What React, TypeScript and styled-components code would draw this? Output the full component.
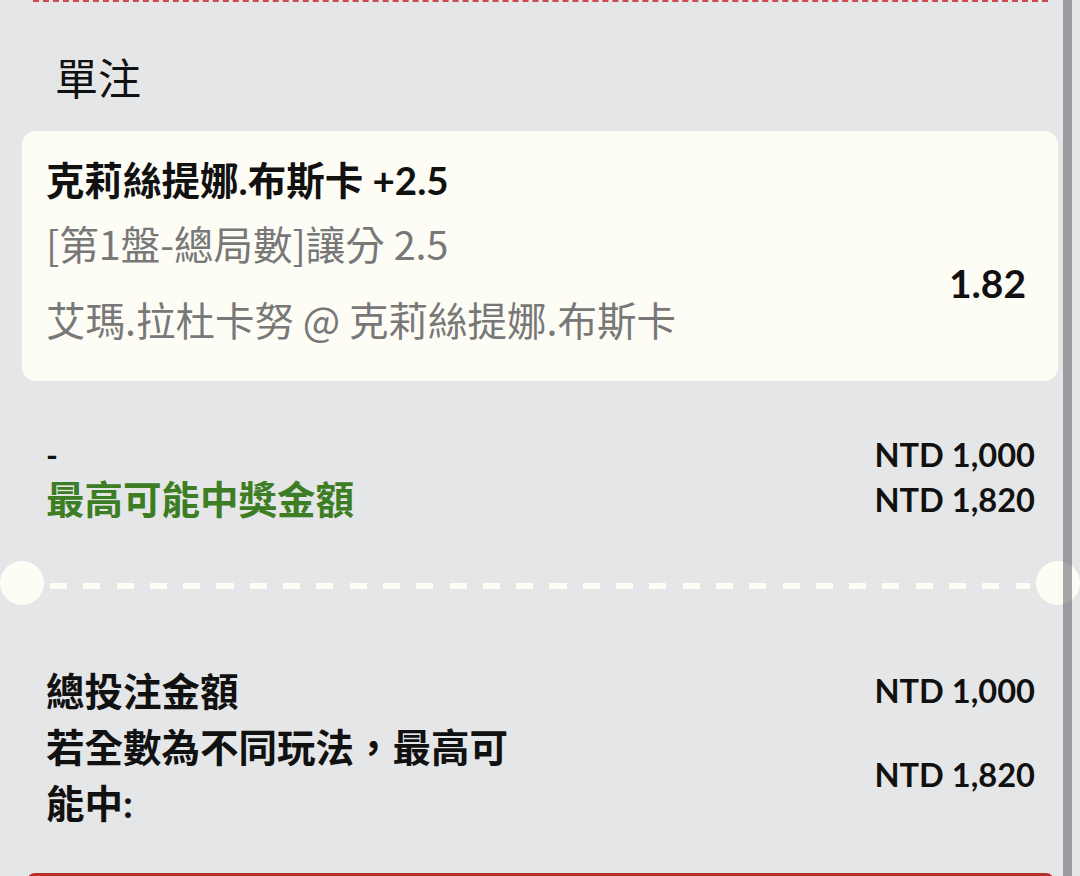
import styled, {createGlobalStyle} from "styled-components";

const GlobalStyle = createGlobalStyle`
  html, body {
    margin: 0;
    padding: 0;
    height: 876px;
    overflow: hidden;
    background-color: #e5e6e8;
  }
  body {
    font-family: Lato, "Noto Sans CJK TC", sans-serif;
    color: #111;
  }
`;

const Page = styled.div`
  position: relative;
  height: 876px;
  padding: 0 22px;
  box-sizing: border-box;
`;

const TopEdge = styled.div`
  margin: 0 10px 0 11px;
  border-top: 2px dashed #cf4a4f;
`;

const Heading = styled.h2`
  margin: 49px 0 24px 33px;
  font-size: 43px;
  line-height: 56px;
  font-weight: 400;
`;

const BetCard = styled.div`
  display: flex;
  align-items: flex-start;
  justify-content: space-between;
  height: 250px;
  box-sizing: border-box;
  padding: 25px 32px 0 24px;
  background-color: #fdfdf6;
  border-radius: 14px;
`;

const BetInfo = styled.div`
  display: flex;
  flex-direction: column;
`;

const BetTitle = styled.div`
  font-size: 38.5px;
  line-height: 48px;
  font-weight: 700;
  white-space: nowrap;
`;

const BetDetail = styled.div<{$gap: number}>`
  font-family: "Noto Sans CJK TC", "Noto Sans", sans-serif;
  font-size: 39.5px;
  line-height: 48px;
  font-weight: 400;
  color: #787878;
  margin-top: ${(p) => p.$gap}px;
  white-space: nowrap;
`;

const Odds = styled.div`
  font-size: 39px;
  line-height: 48px;
  font-weight: 700;
  margin-top: 103px;
`;

const Summary = styled.div<{$top: number}>`
  display: flex;
  flex-direction: column;
  padding: 0 23px 0 24px;
  margin-top: ${(p) => p.$top}px;
`;

const Row = styled.div<{$line: number}>`
  display: flex;
  align-items: center;
  justify-content: space-between;
  line-height: ${(p) => p.$line}px;
`;

const Label = styled.div<{$green?: boolean; $size?: number}>`
  width: 480px;
  font-size: ${(p) => p.$size ?? 38.5}px;
  font-weight: 700;
  color: ${(p) => (p.$green ? "#3d7d24" : "#111")};
`;

const Amount = styled.div`
  font-size: 32.6px;
  font-weight: 700;
  white-space: nowrap;
`;

const Divider = styled.div`
  position: relative;
  height: 44px;
  margin-top: 39px;
  display: flex;
  align-items: center;
`;

const Dashes = styled.div`
  flex: 1;
  height: 6px;
  margin: 6px 28px 0;
  background: repeating-linear-gradient(
    to right,
    #fdfdf6 0 17px,
    transparent 17px 33.3px
  );
`;

const Notch = styled.div<{$side: "left" | "right"}>`
  position: absolute;
  top: 0;
  ${(p) => p.$side}: -22px;
  width: 44px;
  height: 44px;
  border-radius: 50%;
  background-color: #fdfdf6;
`;

const SubmitBar = styled.div`
  position: absolute;
  left: 27px;
  right: 26px;
  top: 873px;
  height: 60px;
  border-radius: 8px;
  background-color: #b5302b;
`;

const Scrollbar = styled.div`
  position: absolute;
  top: 0;
  right: 8px;
  width: 9px;
  height: 876px;
  background-color: rgba(80, 80, 86, 0.5);
`;

function App() {
  return (
    <>
      <GlobalStyle />
      <Page>
        <TopEdge />
        <Heading>單注</Heading>
        <BetCard>
          <BetInfo>
            <BetTitle>克莉絲提娜.布斯卡 +2.5</BetTitle>
            <BetDetail $gap={15}>[第1盤-總局數]讓分 2.5</BetDetail>
            <BetDetail $gap={28}>艾瑪.拉杜卡努 @ 克莉絲提娜.布斯卡</BetDetail>
          </BetInfo>
          <Odds>1.82</Odds>
        </BetCard>

        <Summary $top={51}>
          <Row $line={45}>
            <Label $size={32}>-</Label>
            <Amount>NTD 1,000</Amount>
          </Row>
          <Row $line={45}>
            <Label $green>最高可能中獎金額</Label>
            <Amount>NTD 1,820</Amount>
          </Row>
        </Summary>

        <Divider>
          <Notch $side="left" />
          <Dashes />
          <Notch $side="right" />
        </Divider>

        <Summary $top={58}>
          <Row $line={56}>
            <Label>總投注金額</Label>
            <Amount>NTD 1,000</Amount>
          </Row>
          <Row $line={56}>
            <Label>若全數為不同玩法，最高可能中:</Label>
            <Amount>NTD 1,820</Amount>
          </Row>
        </Summary>

        <SubmitBar />
        <Scrollbar />
      </Page>
    </>
  );
}

export default App;
